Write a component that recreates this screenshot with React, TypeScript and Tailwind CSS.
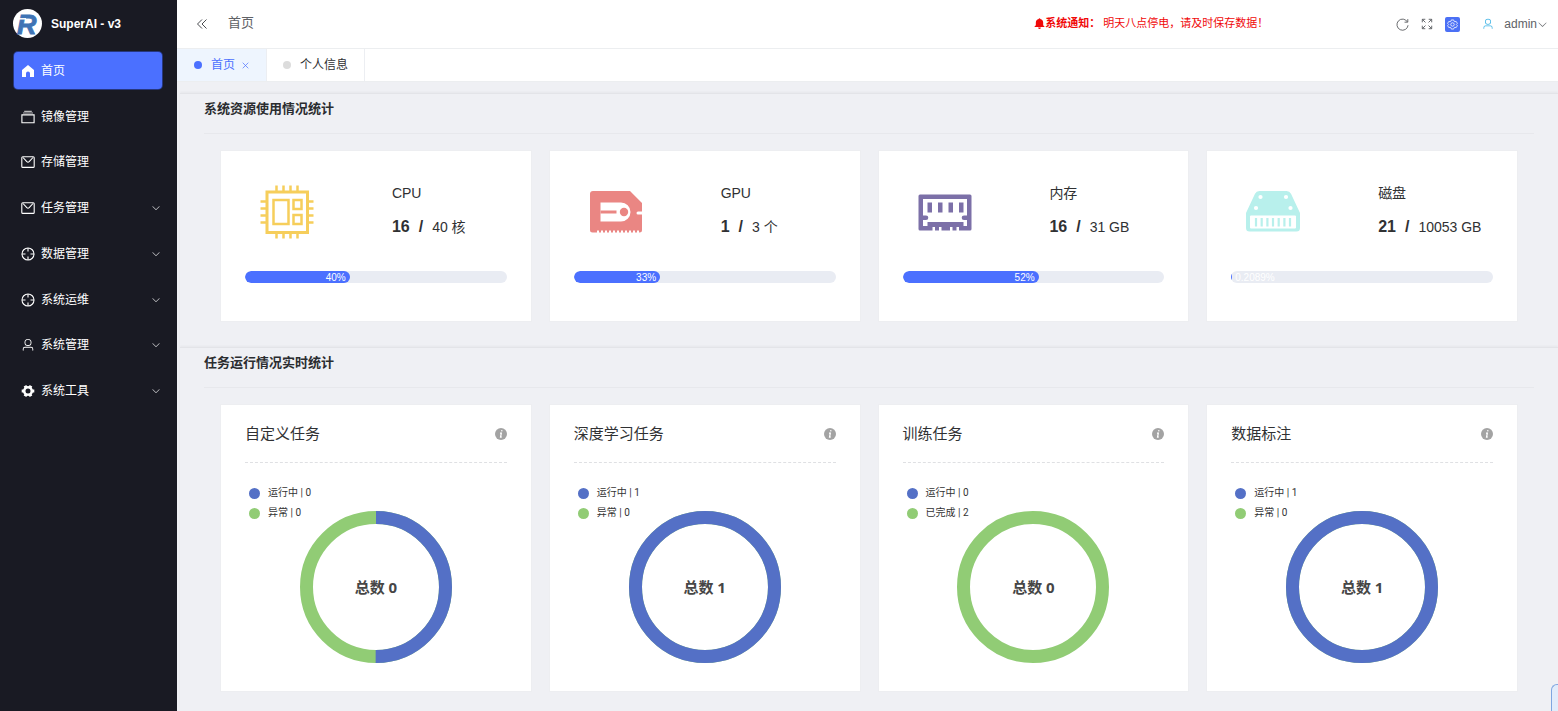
import { useState } from "react";
import type { ReactNode } from "react";

type IconProps = { className?: string };

const ChevronDown = ({ className = "" }: IconProps) => (
  <svg viewBox="0 0 1024 1024" fill="currentColor" className={className} aria-hidden="true">
    <path d="M831.872 340.864 512 652.672 192.128 340.864a30.592 30.592 0 0 0-42.752 0 29.12 29.12 0 0 0 0 41.6L489.664 714.24a32 32 0 0 0 44.672 0l340.288-331.712a29.12 29.12 0 0 0 0-41.728 30.592 30.592 0 0 0-42.752 0z" />
  </svg>
);

const UserIcon = ({ className = "" }: IconProps) => (
  <svg viewBox="0 0 1024 1024" fill="currentColor" className={className} aria-hidden="true">
    <path d="M512 512a192 192 0 1 0 0-384 192 192 0 0 0 0 384zm0 64a256 256 0 1 1 0-512 256 256 0 0 1 0 512zm320 320v-96a96 96 0 0 0-96-96H288a96 96 0 0 0-96 96v96a32 32 0 1 1-64 0v-96a160 160 0 0 1 160-160h448a160 160 0 0 1 160 160v96a32 32 0 1 1-64 0z" />
  </svg>
);

const HomeIcon = ({ className = "" }: IconProps) => (
  <svg viewBox="0 0 14 14" fill="currentColor" className={className} aria-hidden="true">
    <path d="M7 1 1 6v7h4V9.500a2 2 0 0 1 4 0V13h4V6z" />
  </svg>
);

const BoxIcon = ({ className = "" }: IconProps) => (
  <svg viewBox="0 0 14 14" fill="none" stroke="currentColor" className={className} aria-hidden="true">
    <path d="M.9 4.900h12.200v7.800H.9z" strokeWidth="1.100" />
    <path d="M2 3h10M3.200 1.300h7.600" strokeWidth="1.200" opacity=".7" />
  </svg>
);

const MailIcon = ({ className = "" }: IconProps) => (
  <svg viewBox="0 0 14 14" fill="none" stroke="currentColor" strokeWidth="1.100" className={className} aria-hidden="true">
    <rect x=".8" y="1.800" width="12.400" height="10.600" rx="1" />
    <path d="M2 2.500 5.800 6.600a1.700 1.700 0 0 0 2.400 0L12 2.500" />
  </svg>
);

const AimIcon = ({ className = "" }: IconProps) => (
  <svg viewBox="0 0 14 14" fill="none" stroke="currentColor" strokeWidth="1.100" className={className} aria-hidden="true">
    <circle cx="7" cy="7" r="6" />
    <path d="M7 1v3.500M7 9.500V13M1 7h3.500M9.500 7H13" />
  </svg>
);

const ToolIcon = ({ className = "" }: IconProps) => (
  <svg viewBox="0 0 14 14" fill="none" stroke="currentColor" className={className} aria-hidden="true">
    <circle cx="7" cy="7" r="3.800" strokeWidth="2.600" />
    <path d="M4 1.800 5 3.600M10 1.800 9 3.600M4 12.200l1-1.800M10 12.200l-1-1.800M.7 7h2M11.300 7h2" strokeWidth="3" />
  </svg>
);

const BellIcon = ({ className = "" }: IconProps) => (
  <svg viewBox="0 0 12 12" fill="currentColor" className={className} aria-hidden="true">
    <path d="M6 .3c.5 0 .9.300.9.900C8.900 1.700 10 3.200 10 5v3l1.400 1.300v.6H.6v-.6L2 8V5c0-1.800 1.100-3.300 3.100-3.800 0-.6.4-.9.9-.9z" />
    <path d="M4.600 10.300h2.800v.3a1.400 1.400 0 0 1-2.800 0z" />
  </svg>
);

const RefreshIcon = ({ className = "" }: IconProps) => (
  <svg viewBox="0 0 14 14" fill="none" stroke="currentColor" strokeWidth="1" className={className} aria-hidden="true">
    <path d="M12.300 4.300A6 6 0 1 0 13 7.800" />
    <path d="M9.200 4.500h3.500V1.200" />
  </svg>
);

const FullscreenIcon = ({ className = "" }: IconProps) => (
  <svg viewBox="0 0 14 14" fill="none" stroke="currentColor" strokeWidth="1.100" className={className} aria-hidden="true">
    <path d="M1.500 5V1.500H5M9 1.500h3.500V5M12.500 9v3.500H9M5 12.500H1.500V9" />
    <path d="M1.500 1.500 5.200 5.200M12.500 1.500 8.800 5.200M12.500 12.500 8.800 8.800M1.500 12.500l3.700-3.700" />
  </svg>
);

const SettingIcon = ({ className = "" }: IconProps) => (
  <svg viewBox="0 0 14 14" fill="none" stroke="currentColor" strokeWidth="1" className={className} aria-hidden="true">
    <path d="M5.500 1.200h3l.5 1.700 1 .6 1.700-.4 1.500 2.500L12 6.800v.4l1.200 1.200-1.500 2.500-1.700-.4-1 .6-.5 1.700h-3L5 11.100l-1-.6-1.700.4L.8 8.400 2 7.200v-.4L.8 5.600l1.500-2.500 1.700.4 1-.6z" />
    <circle cx="7" cy="7" r="2.200" />
  </svg>
);

const CpuIcon = () => (
  <svg viewBox="0 0 56 56" fill="none" stroke="#f6ce5b" className="size-14" aria-hidden="true">
    <rect x="8" y="8" width="40.500" height="40.500" strokeWidth="3" />
    <rect x="14.500" y="16" width="15" height="24" strokeWidth="2.500" />
    <rect x="34.500" y="16" width="8" height="9" strokeWidth="2.500" />
    <rect x="34.500" y="31" width="8" height="9" strokeWidth="2.500" />
    <path
      d="M17.500 1.500V8M24.500 1.500V8M31.500 1.500V8M38.500 1.500V8M17.500 48v6.500M24.500 48v6.500M31.500 48v6.500M38.500 48v6.500M1.500 17.500H8M1.500 24.500H8M1.500 31.500H8M1.500 38.500H8M48 17.500h6.500M48 24.500h6.500M48 31.500h6.500M48 38.500h6.500"
      strokeWidth="2.500"
    />
  </svg>
);

const GpuIcon = () => (
  <svg viewBox="0 0 56 56" fill="#ea8683" className="size-14" aria-hidden="true">
    <path
      fillRule="evenodd"
      d="M5 7h37l12 12v8.500h-4a1.500 1.500 0 0 0 0 3h4V46a2.500 2.500 0 0 1-2.500 2.500H51v-2h-2v2h-2v-2h-2v2h-2v-2h-2v2h-2v-2h-2v2h-2v-2h-2v2h-2v-2h-2v2h-2v-2h-2v2h-2v-2h-2v2h-2v-2h-2v2h-2v-2h-2v2h-2v-2H9v2H4.500A2.500 2.500 0 0 1 2 46V10a3 3 0 0 1 3-3zM12.500 18.500v19H33a9.500 9.500 0 0 0 0-19z"
    />
    <path d="M12.500 26.500h16v3h-16z" />
    <circle cx="36" cy="28" r="4.200" />
  </svg>
);

const MemoryIcon = () => (
  <svg viewBox="0 0 56 56" fill="#7c70a8" className="size-14" aria-hidden="true">
    <path
      fillRule="evenodd"
      d="M3 10.500h50a1.500 1.500 0 0 1 1.500 1.500v33a1.500 1.500 0 0 1-1.500 1.500H42v-3.500h-2.500v3.500h-4v-3.500H33v3.500h-8.500v-3.500H22v3.500h-4v-3.500h-2.500v3.500H3A1.500 1.500 0 0 1 1.500 45V12A1.500 1.500 0 0 1 3 10.500zM6 15v16.500h3a2.300 2.300 0 0 1 0 4.600H6V42h4.500v-4h36v4H50v-5.900h-3a2.300 2.300 0 0 1 0-4.600h3V15z"
    />
    <path d="M10.500 18.500H15v10h-4.500zM21 18.500h4.500v10H21zM31.500 18.500H36v10h-4.500zM42 18.500h4.500v10H42z" />
  </svg>
);

const DiskIcon = () => (
  <svg viewBox="0 0 56 56" className="size-14" aria-hidden="true">
    <path
      d="M15 7h26.500a5 5 0 0 1 4.500 2.800L55 29v15a3.500 3.500 0 0 1-3.500 3.500h-47A3.500 3.500 0 0 1 1 44V29l9-19.200A5 5 0 0 1 15 7z"
      fill="#b8f0ec"
    />
    <g fill="#fff">
      <circle cx="15.500" cy="13" r="2.100" />
      <circle cx="41" cy="13" r="2.100" />
      <circle cx="11" cy="24" r="2.100" />
      <circle cx="45.500" cy="24" r="2.100" />
      <rect x="5" y="31.500" width="46" height="13" rx="1" />
    </g>
    <path
      d="M11 34v8.500M16.700 34v8.500M22.400 34v8.500M28 34v8.500M33.700 34v8.500M39.400 34v8.500M45 34v8.500"
      stroke="#b8f0ec"
      strokeWidth="2.200"
    />
  </svg>
);

const menus = [
  { title: "首页", icon: HomeIcon, children: false },
  { title: "镜像管理", icon: BoxIcon, children: false },
  { title: "存储管理", icon: MailIcon, children: false },
  { title: "任务管理", icon: MailIcon, children: true },
  { title: "数据管理", icon: AimIcon, children: true },
  { title: "系统运维", icon: AimIcon, children: true },
  { title: "系统管理", icon: UserIcon, children: true },
  { title: "系统工具", icon: ToolIcon, children: true },
];

const resources = [
  { name: "CPU", used: 16, total: "40 核", percent: 40, icon: <CpuIcon /> },
  { name: "GPU", used: 1, total: "3 个", percent: 33, icon: <GpuIcon /> },
  { name: "内存", used: 16, total: "31 GB", percent: 52, icon: <MemoryIcon /> },
  { name: "磁盘", used: 21, total: "10053 GB", percent: 0.2089, icon: <DiskIcon /> },
];

// share = part of the ring taken by the first legend entry
const tasks = [
  { title: "自定义任务", legend: ["运行中 | 0", "异常 | 0"], total: 0, share: 0.5 },
  { title: "深度学习任务", legend: ["运行中 | 1", "异常 | 0"], total: 1, share: 1 },
  { title: "训练任务", legend: ["运行中 | 0", "已完成 | 2"], total: 0, share: 0 },
  { title: "数据标注", legend: ["运行中 | 1", "异常 | 0"], total: 1, share: 1 },
];

function Sidebar() {
  const [active, setActive] = useState("首页");

  return (
    <aside className="w-[177px] shrink-0 bg-[#191a23] text-white">
      <div className="flex h-[47px] items-center gap-[9px] pl-[13px]">
        <svg viewBox="0 0 29 29" className="size-[29px]" role="img" aria-label="SuperAI">
          <circle cx="14.500" cy="14.500" r="14.500" fill="#fff" />
          <text
            x="4"
            y="24.500"
            fontSize="27"
            fontWeight="700"
            fontStyle="italic"
            fill="#3f74b5"
            stroke="#3f74b5"
            strokeWidth=".8"
            fontFamily="Liberation Sans, sans-serif"
          >
            R
          </text>
          <path d="M5 9.800h8" stroke="#fff" strokeWidth="1.500" />
        </svg>
        <h1 className="text-xs font-bold">SuperAI - v3</h1>
      </div>
      <nav className="pt-[5px] pr-[15px] pl-[14px]">
        <ul className="flex h-[357px] flex-col justify-between">
          {menus.map(({ title, icon: Icon, children }) => (
            <li key={title}>
              <button
                type="button"
                onClick={() => setActive(title)}
                className={`flex h-[37px] w-full items-center gap-1.5 rounded-sm pt-px pr-px pl-[7px] text-xs ${
                  active === title ? "bg-[#4b70ff] shadow-[0_0_0_1px_#26377f]" : ""
                }`}
              >
                <Icon className="size-[14px]" />
                <span className="flex-1 text-left">{title}</span>
                {children && <ChevronDown className="size-[10px] text-[#c8c9cc]" />}
              </button>
            </li>
          ))}
        </ul>
      </nav>
    </aside>
  );
}

function Header() {
  return (
    <header className="flex h-12 items-center justify-between bg-white pr-[10px] pl-[19px] text-[#606266]">
      <div className="flex items-center gap-5">
        <button type="button" aria-label="折叠菜单">
          <svg viewBox="0 0 12 12" fill="none" stroke="#4a4c50" strokeWidth="1" className="size-3">
            <path d="M6 1.500 1.500 6 6 10.500M10.500 1.500 6 6l4.500 4.500" />
          </svg>
        </button>
        <span className="pb-0.5 text-[13px]">首页</span>
      </div>
      <div className="flex items-center">
        <p className="mr-[128px] flex items-center pb-0.5 text-[11px] text-[#f00808]">
          <BellIcon className="size-[11px]" />
          <strong className="mr-[3px]">系统通知：</strong>
          明天八点停电，请及时保存数据！
        </p>
        <div className="flex items-center gap-3">
          <button type="button" aria-label="刷新">
            <RefreshIcon className="size-[13px]" />
          </button>
          <button type="button" aria-label="全屏">
            <FullscreenIcon className="size-3" />
          </button>
          <button type="button" aria-label="设置" className="rounded-xs bg-[#4b70f5] p-0.5 text-white">
            <SettingIcon className="size-[11px]" />
          </button>
        </div>
        <button type="button" className="ml-[22px] flex items-center text-xs">
          <UserIcon className="mr-[10px] size-3 text-[#40b4e5]" />
          admin
          <ChevronDown className="size-[11px]" />
        </button>
      </div>
    </header>
  );
}

function TabBar() {
  return (
    <div className="flex h-[34px] border-y border-[#eceef0] bg-white text-xs">
      <div className="flex items-center border-r border-[#eceef2] bg-[#eef5fe] px-[17px] text-[#4b70ff]">
        <span className="mr-[9px] size-2 rounded-full bg-[#4b70ff]" />
        <a href="#home">首页</a>
        <button type="button" aria-label="关闭" className="ml-[7px]">
          <svg viewBox="0 0 8 8" fill="none" stroke="currentColor" strokeWidth=".8" className="size-[7px]">
            <path d="m.8.8 6.400 6.400M7.200.8.8 7.200" />
          </svg>
        </button>
      </div>
      <div className="flex items-center border-r border-[#eceef2] px-4 text-[#303133]">
        <span className="mr-[9px] size-2 rounded-full bg-[#dcdcdc]" />
        <a href="#profile">个人信息</a>
      </div>
    </div>
  );
}

function Section({ title, children }: { title: string; children: ReactNode }) {
  return (
    <section className="border-t border-[#e3e4e8] px-6 pb-[25px] shadow-[0_-1px_2px_rgba(0,0,0,0.04)] last:pb-4">
      <h2 className="border-b border-[#e7e8ec] pt-[5px] pb-[14px] text-[13px] leading-5 font-bold text-[#2b2d30]">
        {title}
      </h2>
      <div className="grid grid-cols-4 gap-[17px] px-4 pt-4">{children}</div>
    </section>
  );
}

function ResourceCard({ item }: { item: (typeof resources)[number] }) {
  return (
    <article className="border border-[#edeef1] bg-white px-6 pt-[30px] pb-[38px]">
      <div className="grid grid-cols-2">
        <div className="pt-[3px] pl-[14px]">{item.icon}</div>
        <div className="flex flex-col gap-[10px] pl-4 text-[14px] leading-6 whitespace-nowrap text-[#303133]">
          <h3>{item.name}</h3>
          <p className="flex items-baseline gap-[9px]">
            <strong className="text-base leading-6">{item.used}</strong>
            <strong className="text-base leading-6">/</strong>
            <span>{item.total}</span>
          </p>
        </div>
      </div>
      <div className="mt-[31px] h-3 overflow-hidden rounded-full bg-[#e9ecf3]">
        <div
          className="h-3 rounded-full bg-[#4b70ff] text-right text-[10px] leading-[14px] whitespace-nowrap text-white"
          style={{ width: `${item.percent}%` }}
        >
          <span className="mx-1">{item.percent}%</span>
        </div>
      </div>
    </article>
  );
}

function Ring({ share }: { share: number }) {
  const r = 69.5;
  const length = 2 * Math.PI * r;

  return (
    <svg viewBox="0 0 152 152" fill="none" strokeWidth="13" className="col-start-1 row-start-1 size-[152px]" aria-hidden="true">
      <circle cx="76" cy="76" r={r} stroke="#91cc75" />
      {share > 0 && (
        <circle
          cx="76"
          cy="76"
          r={r}
          stroke="#5470c6"
          strokeDasharray={share < 1 ? `${length * share} ${length}` : undefined}
          transform="rotate(-90 76 76)"
        />
      )}
    </svg>
  );
}

function TaskCard({ task }: { task: (typeof tasks)[number] }) {
  return (
    <article className="border border-[#edeef1] bg-white px-6 pt-[17px] pb-7">
      <div className="flex items-center justify-between border-b border-dashed border-[#dfe0e3] pb-4">
        <h3 className="text-[15px] leading-6 text-[#303133]">{task.title}</h3>
        <button type="button" aria-label="说明">
          <svg viewBox="0 0 12 12" className="size-3">
            <circle cx="6" cy="6" r="6" fill="#a3a3a3" />
            <path d="M6.900 2.200 6.700 3.400M5 5.100h1.300L5.600 9H6.700" stroke="#fff" strokeWidth="1.300" fill="none" />
          </svg>
        </button>
      </div>
      <ul className="mt-5 pl-1 font-[Roboto,'Noto_Sans_CJK_SC',sans-serif] text-[10px] leading-5 text-[#333]">
        <li className="flex items-center gap-2">
          <span className="size-[11px] rounded-full bg-[#5470c6]" />
          {task.legend[0]}
        </li>
        <li className="flex items-center gap-2">
          <span className="size-[11px] rounded-full bg-[#91cc75]" />
          {task.legend[1]}
        </li>
      </ul>
      <div className="-mt-3 grid place-items-center">
        <Ring share={task.share} />
        <p className="col-start-1 row-start-1 font-['Noto_Sans','Noto_Sans_CJK_SC',sans-serif] text-[15px] leading-6 font-bold text-[#464646]">
          总数 {task.total}
        </p>
      </div>
    </article>
  );
}

export default function App() {
  return (
    <div className="flex min-h-screen bg-[#eff0f4] font-['Liberation_Sans','Noto_Sans_CJK_SC',sans-serif]">
      <Sidebar />
      <div className="min-w-0 flex-1">
        <Header />
        <TabBar />
        <main className="pt-[11px] pl-[3px]">
          <Section title="系统资源使用情况统计">
            {resources.map((item) => (
              <ResourceCard key={item.name} item={item} />
            ))}
          </Section>
          <Section title="任务运行情况实时统计">
            {tasks.map((task) => (
              <TaskCard key={task.title} task={task} />
            ))}
          </Section>
        </main>
      </div>
      {/* Drawer handle (Bottom Right) */}
      <button
        type="button"
        aria-label="展开"
        className="fixed right-0 bottom-0 h-[27px] w-[7px] rounded-tl-md border-t border-l border-[#7fa6e0] bg-[#e1ecfb]"
      />
    </div>
  );
}
